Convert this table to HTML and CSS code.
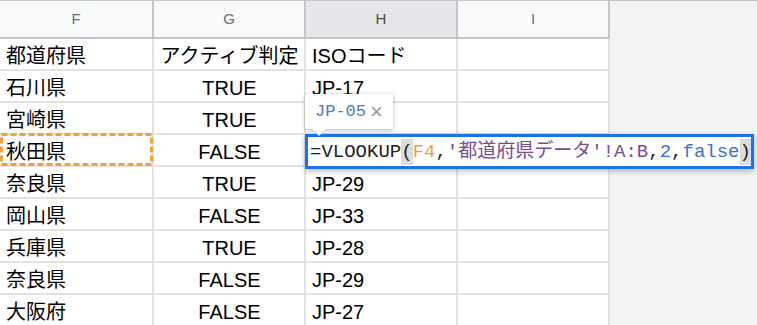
FILE: index.html
```html
<!DOCTYPE html>
<html lang="ja">
<head>
<meta charset="utf-8">
<link rel="stylesheet" href="styles.css">
</head>
<body>
<div class="sheet">
  <div class="grid">
    <div class="hcell">F</div>
    <div class="hcell">G</div>
    <div class="hcell sel">H</div>
    <div class="hcell">I</div>

    <div class="cell">都道府県</div>
    <div class="cell center">アクティブ判定</div>
    <div class="cell">ISOコード</div>
    <div class="cell"></div>

    <div class="cell">石川県</div>
    <div class="cell center">TRUE</div>
    <div class="cell">JP-17</div>
    <div class="cell"></div>

    <div class="cell">宮崎県</div>
    <div class="cell center">TRUE</div>
    <div class="cell"></div>
    <div class="cell"></div>

    <div class="cell ref">秋田県<svg class="dash" width="154" height="34" viewBox="0 0 154 34"><rect x="1.5" y="1.5" width="150" height="30" fill="none" stroke="#f4a13a" stroke-width="3" stroke-dasharray="6 3"/></svg></div>
    <div class="cell center">FALSE</div>
    <div class="cell"></div>
    <div class="cell"></div>

    <div class="cell">奈良県</div>
    <div class="cell center">TRUE</div>
    <div class="cell">JP-29</div>
    <div class="cell"></div>

    <div class="cell">岡山県</div>
    <div class="cell center">FALSE</div>
    <div class="cell">JP-33</div>
    <div class="cell"></div>

    <div class="cell">兵庫県</div>
    <div class="cell center">TRUE</div>
    <div class="cell">JP-28</div>
    <div class="cell"></div>

    <div class="cell">奈良県</div>
    <div class="cell center">FALSE</div>
    <div class="cell">JP-29</div>
    <div class="cell"></div>

    <div class="cell">大阪府</div>
    <div class="cell center">FALSE</div>
    <div class="cell">JP-27</div>
    <div class="cell"></div>
  </div>

  <div class="editor"><span class="tx">=VLOOKUP</span><span class="par">(</span><span class="c-or">F4</span><span class="tx">,</span><span class="c-pu">'都道府県データ'!A:B</span><span class="tx">,</span><span class="c-bl">2</span><span class="tx">,</span><span class="c-bl">false</span><span class="par">)</span></div>

  <div class="tip"><span class="tip-val">JP-05</span><span class="tip-x">×</span></div>
</div>
</body>
</html>
```

FILE: styles.css
```css
* { box-sizing: border-box; }

html, body {
  margin: 0;
  padding: 0;
}

body {
  width: 757px;
  height: 325px;
  overflow: hidden;
  background: #f3f3f3;
  font-family: "Liberation Sans", Arial, "Noto Sans CJK JP", sans-serif;
}

.sheet {
  position: relative;
  width: 757px;
  height: 325px;
  border-top: 1px solid #c6c6c6;
}

.grid {
  display: grid;
  grid-template-columns: 154px 152px 152px 152px;
  grid-template-rows: 38px;
  grid-auto-rows: 32px;
  width: 610px;
  background: #fff;
}

.hcell {
  display: flex;
  align-items: center;
  justify-content: center;
  background: #f8f9fa;
  border-right: 2px solid #c4c7c5;
  border-bottom: 2px solid #c4c7c5;
  color: #6a6d70;
  font-size: 15px;
  padding-bottom: 1px;
}

.hcell.sel {
  background: #e5e7ea;
  color: #4a4a4a;
}

.cell {
  display: flex;
  align-items: flex-end;
  border-right: 2px solid #e2e2e2;
  border-bottom: 2px solid #e2e2e2;
  padding: 0 5px 1px 6px;
  font-size: 20px;
  line-height: 24px;
  color: #000;
  white-space: nowrap;
  overflow: hidden;
}

.cell.center {
  justify-content: center;
}

.cell.ref {
  position: relative;
  overflow: visible;
}

.dash {
  position: absolute;
  left: 0;
  top: -2px;
}

.editor {
  position: absolute;
  left: 305px;
  top: 133px;
  width: 449px;
  height: 35px;
  border: 3px solid #1a73e8;
  background: #fff;
  box-shadow: 0 2px 6px rgba(0, 0, 0, 0.28);
  display: flex;
  align-items: center;
  padding-left: 2px;
  font-family: "Liberation Mono", "Noto Sans CJK JP", monospace;
  font-size: 19px;
  line-height: 26px;
  white-space: nowrap;
  color: #222;
}

.editor .par {
  background: #dcdcdc;
  color: #222;
}

.c-or { color: #f39c34; }
.c-pu { color: #7c4a91; }
.c-bl { color: #3c6fd8; }

.tip {
  position: absolute;
  left: 305px;
  top: 93px;
  width: 88px;
  height: 35px;
  background: #fff;
  border-radius: 2px;
  box-shadow: 0 1px 4px rgba(0, 0, 0, 0.3);
  display: flex;
  align-items: center;
  padding-left: 10px;
}

.tip::after {
  content: "";
  position: absolute;
  left: 7px;
  bottom: -7px;
  border-left: 7px solid transparent;
  border-right: 7px solid transparent;
  border-top: 7px solid #fff;
  filter: drop-shadow(0 1px 0 rgba(0, 0, 0, 0.15));
}

.tip-val {
  font-family: "Liberation Mono", monospace;
  font-size: 17px;
  color: #4a76d6;
}

.tip-x {
  margin-left: 4px;
  font-size: 22px;
  color: #9a9a9a;
  line-height: 1;
}
```
